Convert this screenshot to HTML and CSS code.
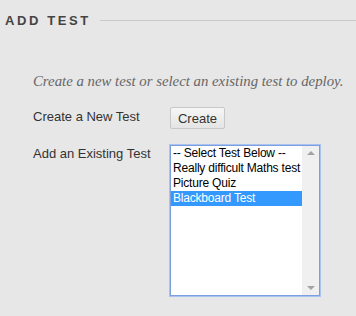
FILE: index.html
```html
<!DOCTYPE html>
<html lang="en">
<head>
    <meta charset="UTF-8">
    <title>Add Test</title>
    <link rel="stylesheet" href="styles.css">
</head>
<body>

    <div class="step-header">
        <h2 class="step-title">Add Test</h2>
        <span class="step-rule"></span>
    </div>

    <div class="step-body">
        <p class="step-help">Create a new test or select an existing test to deploy.</p>

        <div class="field-row create-row">
            <label class="field-label">Create a New Test</label>
            <button class="btn">Create</button>
        </div>

        <div class="field-row">
            <label class="field-label">Add an Existing Test</label>
            <div class="list-box">
                <div class="list-items">
                    <div class="list-item">-- Select Test Below --</div>
                    <div class="list-item">Really difficult Maths test</div>
                    <div class="list-item">Picture Quiz</div>
                    <div class="list-item selected">Blackboard Test</div>
                </div>
                <div class="list-scroll">
                    <span class="arrow up"></span>
                    <span class="arrow down"></span>
                </div>
            </div>
        </div>
    </div>

</body>
</html>
```

FILE: styles.css
```css
* {
    margin: 0;
    padding: 0;
    box-sizing: border-box;
}
body {
    background: #e7e7e7;
    font-family: 'Liberation Sans', Arial, sans-serif;
    font-size: 13px;
    color: #333;
    width: 356px;
    height: 316px;
    overflow: hidden;
}
.step-header {
    display: flex;
    align-items: center;
    padding: 13px 0 0 5px;
}
.step-title {
    font-size: 13px;
    font-weight: bold;
    text-transform: uppercase;
    letter-spacing: 2.6px;
    color: #444;
    line-height: 15px;
}
.step-rule {
    flex: 1;
    height: 1px;
    background: #c9c9c9;
    margin-left: 9px;
}
.step-body {
    padding: 0 0 0 33px;
}
.step-help {
    font-family: 'Liberation Serif', Georgia, serif;
    font-style: italic;
    font-size: 14.8px;
    color: #666;
    margin-top: 45px;
    line-height: 17px;
    white-space: nowrap;
}
.field-row {
    display: flex;
    align-items: flex-start;
}
.create-row {
    margin-top: 17px;
    margin-bottom: 16px;
}
.field-label {
    width: 137px;
    line-height: 15px;
    padding-top: 1px;
}
.create-row .field-label {
    padding-top: 2px;
}
.btn {
    font-family: 'Liberation Sans', Arial, sans-serif;
    font-size: 13px;
    color: #333;
    height: 22px;
    width: 55px;
    border: 1px solid #c8c8c8;
    border-radius: 2px;
    background: linear-gradient(#f6f6f6, #e4e4e4);
}
.list-box {
    display: flex;
    width: 150px;
    height: 151px;
    background: #fff;
    border: 1px solid #7b9fe0;
    box-shadow: 0 0 0 1px #a9c2f0;
}
.list-items {
    flex: 1;
}
.list-item {
    font-size: 12px;
    letter-spacing: -0.2px;
    line-height: 15px;
    height: 15px;
    padding-left: 2px;
    color: #000;
    white-space: nowrap;
}
.list-item.selected {
    background: #3399ff;
    color: #fff;
}
.list-scroll {
    width: 17px;
    background: #f0f0f0;
    display: flex;
    flex-direction: column;
    justify-content: space-between;
    align-items: center;
    padding: 5px 0;
}
.arrow {
    width: 0;
    height: 0;
    border-left: 4px solid transparent;
    border-right: 4px solid transparent;
}
.arrow.up {
    border-bottom: 4px solid #a3a3a3;
}
.arrow.down {
    border-top: 4px solid #a3a3a3;
}
```
